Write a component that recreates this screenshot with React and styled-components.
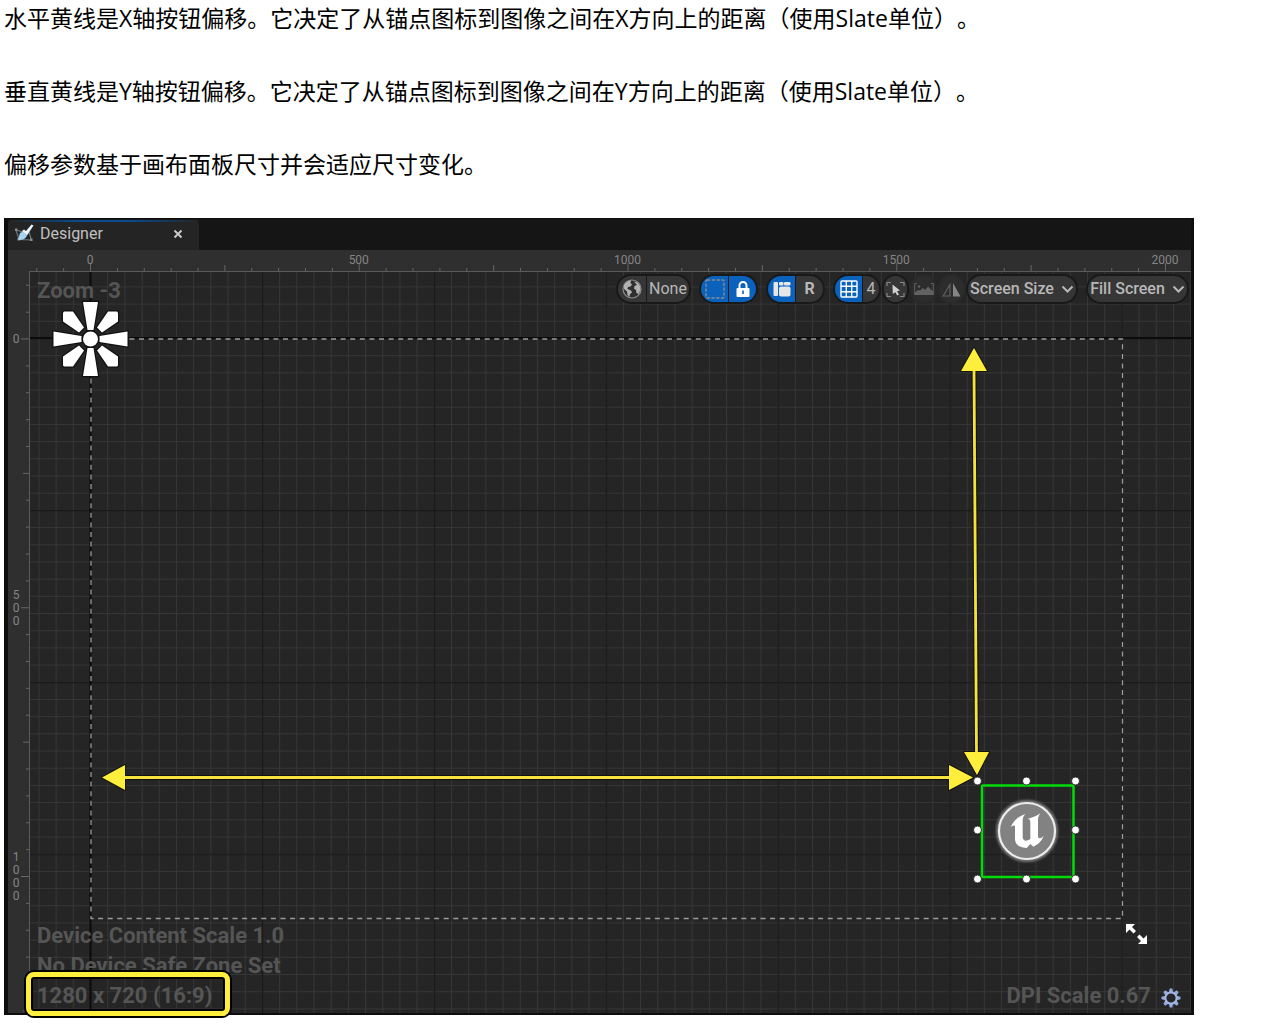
import React from "react";
import styled, { createGlobalStyle } from "styled-components";

const Global = createGlobalStyle`
  *, *::before, *::after { box-sizing: border-box; }
  body { margin: 0; background: #fff; color: #000; }
`;

const Article = styled.main`
  padding: 0 12px 14px 4px;
  font-family: "Open Sans", "Noto Sans CJK SC", sans-serif;
`;

const Copy = styled.div`
  display: grid;
  gap: 37px;
  padding-bottom: 36px;
`;

const Paragraph = styled.p`
  margin: 0;
  font-size: 23px;
  line-height: 36px;
  text-spacing-trim: space-all;
  font-feature-settings: "chws" 0, "halt" 0;
`;

const Panel = styled.section`
  max-width: 1190px;
  border: 1px solid #0e0e0e;
  border-width: 1px 3px 2px 4px;
  background: #242424;
  font-family: Roboto, sans-serif;
  color: #c0c0c0;
`;

const TabBar = styled.div`
  display: flex;
  height: 31px;
  padding-top: 1px;
  background: #151515;
`;

const Tab = styled.div`
  display: flex;
  align-items: center;
  gap: 6px;
  width: 191px;
  padding: 0 14px 2px 6px;
  border-radius: 4px 4px 0 0;
  background: linear-gradient(90deg, #242424, #0b4a8c 35%, #0b4a8c 65%, #242424) 0 0 / 100% 2px no-repeat #242424;
  font-size: 16px;
  line-height: 24px;
`;

const TabTitle = styled.span`
  flex: 1;
`;

const CloseButton = styled.button`
  display: flex;
  padding: 2px;
  border: 0;
  background: none;
  color: #c8c8c8;
`;

const Workspace = styled.div`
  display: grid;
  grid-template-columns: 22px 1fr;
  grid-template-rows: 22px 741px;
  background: #2f2f2f;
`;

const TopRuler = styled.svg`
  grid-column: 1 / 3;
  width: 100%;
  height: 22px;
  font-size: 12px;
`;

const SideRuler = styled.svg`
  width: 22px;
  height: 100%;
  font-size: 12px;
`;

const Canvas = styled.div`
  display: grid;
  grid-template: 1fr / minmax(0, 1fr);
  background: #252525;
`;

const Scene = styled.svg`
  grid-area: 1 / 1;
  width: 100%;
  height: 100%;
`;

const Overlay = styled.div`
  grid-area: 1 / 1;
  z-index: 1;
  display: flex;
  flex-direction: column;
  justify-content: space-between;
  padding: 2px 2px 2px 7px;
`;

const OverlayRow = styled.div`
  display: flex;
  justify-content: space-between;
  align-items: ${(p) => p.$align || "flex-start"};
`;

const Hud = styled.div`
  font-size: 22px;
  font-weight: 700;
  line-height: 30px;
  color: #555;
`;

const ZoomLabel = styled(Hud)`
  padding-top: 2px;
`;

const HudLine = styled.div`
  width: max-content;
`;

const Resolution = styled(HudLine)`
  position: relative;
  &::after {
    content: "";
    position: absolute;
    inset: -9px -18px -5px -11px;
    border: 5px solid #ffee3c;
    border-radius: 8px;
    box-shadow: 0 0 0 2px #000, inset 0 0 0 2px #000;
  }
`;

const DpiRow = styled(Hud)`
  display: flex;
  align-items: center;
  gap: 10px;
  padding-right: 8px;
`;

const IconButton = styled.button`
  display: flex;
  padding: 4px 0 0;
  border: 0;
  background: none;
`;

const Toolbar = styled.div`
  display: flex;
  gap: ${(p) => p.$gap || 8}px;
`;

const Pill = styled.div`
  display: flex;
  height: 30px;
  border: 2px solid #191919;
  border-radius: 15px;
  background: #191919;
  overflow: hidden;
  gap: 1px;
`;

const Segment = styled.button`
  display: flex;
  align-items: center;
  justify-content: center;
  width: ${(p) => p.$width}px;
  padding: 0;
  border: 0;
  background: ${(p) => (p.$active ? "#0a62bd" : "#363636")};
  color: ${(p) => (p.$active ? "#fff" : "#b8b8b8")};
  font: ${(p) => (p.$bold ? 700 : 400)} 16px/24px Roboto, sans-serif;
`;

const RoundButton = styled(Segment)`
  width: 27px;
  height: 30px;
  border: 2px solid ${(p) => (p.$dim ? "#2a2a2a" : "#191919")};
  border-radius: 14px;
  background: ${(p) => (p.$dim ? "#2d2d2d" : "#363636")};
  color: ${(p) => (p.$dim ? "#626262" : "#a8a8a8")};
`;

const MenuButton = styled(Segment)`
  gap: 7px;
  height: 30px;
  border: 2px solid #191919;
  border-radius: 15px;
  font-weight: 500;
`;

const Chevron = () => (
  <svg width="13" height="9" viewBox="0 0 13 9" fill="none" stroke="currentColor" strokeWidth="2">
    <path d="M1.5 1.5 6.5 6.5 11.5 1.5" />
  </svg>
);

const DesignerIcon = () => (
  <svg width="20" height="20" viewBox="0 0 20 20">
    <path d="M2 6 5 15.500 17.500 16 15 8M2 6 9 8" fill="none" stroke="#6d7d88" strokeWidth="1.100" />
    <path d="M1 4.500h2.500v2.500H1zM3.500 14h2.500v2.500h-2.500zM16 14.500h2.500v2.500h-2.500z" fill="#888" />
    <path d="M4 16 6 9 9 7.500 13 11.500C12 14.500 9 16.500 4 16Z" fill="#a9d3f2" />
    <path d="M8 7 13 11.500 19.500 1.500 17.500 0.500 12 7 10 5.500Z" fill="#e8f3fb" />
  </svg>
);

const GlobeIcon = () => (
  <svg width="20" height="20" viewBox="0 0 20 20">
    <circle cx="10" cy="10" r="9" fill="#303030" stroke="#8c8c8c" strokeWidth="1.200" />
    <path d="M2 6C4 3 6 1.500 9 1.300L8.500 4 10 5.500 8.500 7.500 6 8 5.500 10 9 11.500 10 13.500 8 15 7.500 18 5.500 16 5 12.500 2 10Z" fill="#b2b2b2" />
    <path d="M12 2.500 15.500 3.500 18 7 18.500 11 16.500 15 14.500 14 14 11 12 9.500 12.500 7 15 6Z" fill="#b2b2b2" />
  </svg>
);

const DashedSquareIcon = () => (
  <svg width="20" height="20" viewBox="0 0 20 20">
    <rect x="1" y="1" width="18" height="18" rx="1" fill="none" stroke="#8c8c8c" strokeWidth="1.400" strokeDasharray="3.200 1.600" />
  </svg>
);

const LockIcon = () => (
  <svg width="14" height="16" viewBox="0 0 14 16">
    <path d="M3.500 8V4.500a3.500 3.500 0 0 1 7 0V8" fill="none" stroke="#fff" strokeWidth="2" />
    <rect x="0.500" y="7" width="13" height="9" rx="1" fill="#fff" />
    <path d="M6.200 9.500h1.600v3.500H6.200z" fill="#0a62bd" />
  </svg>
);

const LayoutIcon = () => (
  <svg width="18" height="16" viewBox="0 0 18 16" fill="#e6e6e6">
    <rect x="0.500" y="1" width="4.500" height="14" rx="1" />
    <rect x="6" y="1" width="4.500" height="3.500" rx="1" />
    <rect x="11" y="1" width="6.500" height="3.500" rx="1" />
    <rect x="6" y="5.500" width="11.500" height="10" rx="2" />
  </svg>
);

const GridIcon = () => (
  <svg width="18" height="18" viewBox="0 0 18 18" fill="none" stroke="#fff" strokeWidth="1.400">
    <rect x="1" y="1" width="16" height="16" rx="1" />
    <path d="M6.300 1v16M11.700 1v16M1 6.300h16M1 11.700h16" />
  </svg>
);

const PointerIcon = () => (
  <svg width="19" height="17" viewBox="0 0 19 17">
    <path d="M1 5V1.500h4M14 1.500H18V5M18 12v3.500h-4M5 15.500H1v-3.500" fill="none" stroke="#888" strokeWidth="1.200" />
    <path d="M6.500 3.500 14 9.500 11 10.200 13 13.500 11.200 14.500 9.400 11.200 6.800 13Z" fill="#d0d0d0" />
  </svg>
);

const PictureIcon = () => (
  <svg width="20" height="14" viewBox="0 0 20 14">
    <path d="M0.700 13V1.500h2M17 1.500h2.300V13" fill="none" stroke="currentColor" />
    <path d="M1 13V10.500L4 8 6 8.500 9 6 11 8 14 4.500 19 9.500V13Z" fill="currentColor" />
    <circle cx="5" cy="4.500" r="1.300" fill="currentColor" />
  </svg>
);

const MirrorIcon = () => (
  <svg width="19" height="15" viewBox="0 0 19 15">
    <path d="M8 2.500V14H1.200Z" fill="none" stroke="currentColor" strokeWidth="1.100" />
    <path d="M11 1V14.500H18.500Z" fill="#858585" />
  </svg>
);

const GearIcon = () => (
  <svg width="20" height="20" viewBox="-10 -10 20 20">
    <g fill="#93a9dd">
      {[0, 45, 90, 135, 180, 225, 270, 315].map((a) => (
        <path key={a} d="M-2.200 -5.500-1.300 -9.500H1.300L2.200 -5.500Z" transform={`rotate(${a})`} />
      ))}
    </g>
    <circle r="5.600" fill="#262626" stroke="#a3b5e2" strokeWidth="2" />
  </svg>
);

/* 500 units of the design span 268.75 pixels at this zoom. */
const STEP = 26.875;
const tickLength = (i) => (i % 10 === 0 ? 8 : i % 5 === 0 ? 6 : 3);
const ticks = (from, to) => Array.from({ length: to - from + 1 }, (_, i) => from + i);

const HorizontalRuler = () => (
  <TopRuler>
    <path d="M21 21.500H2000" stroke="#5a5a5a" />
    {ticks(-2, 40).map((i) => (
      <path key={i} d={`M${82.5 + i * STEP} 21V${21 - tickLength(i)}`} stroke="#666" />
    ))}
    {[0, 1, 2, 3, 4].map((n) => (
      <text key={n} x={82 + n * 268.75} y="14" textAnchor="middle" fill="#858585">{n * 500}</text>
    ))}
  </TopRuler>
);

const VerticalRuler = () => (
  <SideRuler>
    <path d="M21.500 0V741" stroke="#5a5a5a" />
    {ticks(-2, 25).map((i) => (
      <path key={i} d={`M21 ${67 + i * STEP}H${21 - tickLength(i)}`} stroke="#666" />
    ))}
    {["0", "500", "1000"].map((label, n) =>
      [...label].map((c, i) => (
        <text key={label + i} x="8" y={71 + n * 268.75 + (i - (label.length - 1) / 2) * 13} textAnchor="middle" fill="#858585">{c}</text>
      ))
    )}
  </SideRuler>
);

const Arrow = ({ d, heads }) => (
  <g strokeLinejoin="round">
    <path d={d} stroke="#111" strokeWidth="5" />
    <path d={heads} fill="#ffee3c" stroke="#151505" strokeWidth="2" />
    <path d={d} stroke="#f5e23a" strokeWidth="2.800" />
    <path d={heads} fill="#ffee3c" />
  </g>
);

const Anchor = () => (
  <g transform="translate(90.500 339)" fill="#fff" stroke="#111" strokeWidth="2.500" paintOrder="stroke">
    {[0, 90, 180, 270].map((a) => (
      <g key={a} transform={`rotate(${a})`}>
        <path d="M-7.500-37H7.500L3-9H-3Z" />
        <path d="M-27.500-26.500-26.500-27.500H-17.500L-6.500-11.500-11.500-6.500-27.500-17.500Z" />
      </g>
    ))}
    <circle r="7.500" />
  </g>
);

const SelectedImage = () => (
  <g>
    <rect x="982" y="785.500" width="91.500" height="91.500" rx="1" fill="none" stroke="#00dc0a" strokeWidth="2.500" />
    <circle cx="1027" cy="831" r="31" fill="#777" filter="url(#soft)" />
    <circle cx="1027" cy="831" r="28" fill="#828282" stroke="#ececec" strokeWidth="2.200" />
    <path
      transform="translate(920 730) scale(0.33333)"
      fill="#fff"
      d="M272 292C280 272 290 262 316 252C308 261 308 267 308 274V322C309 334 320 335 331 327V277C331 269 328 266 322 267C334 263 350 260 361 250C354 260 354 266 354 274V318C355 328 362 327 371 317C365 334 354 343 340 350L331 342 320 354C300 353 286 346 285 328V291C285 284 278 286 272 292Z"
    />
    {[977.5, 1026.5, 1075.5].map((x) =>
      [781, 830, 879].map((y) =>
        x === 1026.5 && y === 830 ? null : <circle key={`${x}-${y}`} cx={x} cy={y} r="4" fill="#fff" stroke="#111" strokeWidth="0.800" />
      )
    )}
  </g>
);

/* The scene is drawn in panel coordinates; its group shifts them to the canvas corner. */
const CanvasScene = () => (
  <Scene>
    <defs>
      <filter id="soft" x="-20%" y="-20%" width="140%" height="140%">
        <feGaussianBlur stdDeviation="1.200" />
      </filter>
      <pattern id="minor" x="90" y="338" width="17.190" height="17.190" patternUnits="userSpaceOnUse">
        <path d="M0.500 0V17.190M0 0.500H17.190" stroke="#363636" />
      </pattern>
      <pattern id="major" x="90" y="338" width="171.900" height="171.900" patternUnits="userSpaceOnUse">
        <path d="M0.500 0V171.900M0 0.500H171.900" stroke="#171717" strokeWidth="1.500" />
      </pattern>
    </defs>
    <g transform="translate(-30 -272)">
      <rect width="2400" height="1100" fill="url(#minor)" />
      <rect width="2400" height="1100" fill="url(#major)" />
      <path d="M90.500 272V1013M30 338H2400" stroke="#0c0c0c" strokeWidth="2" />
      <rect x="91" y="339" width="1031.500" height="579.500" fill="none" stroke="#9a9a9a" strokeWidth="1.300" strokeDasharray="5 4.600" />
      <Anchor />
      <Arrow d="M974 369 976.500 754" heads="M974 348 987 371H961ZM977 775 964 752H989Z" />
      <Arrow d="M123 777.500H951" heads="M102 777.500 125 765V790ZM973 777.500 949 765V790Z" />
      <SelectedImage />
      <path d="M1126 924h9l-3 3 4 4-2.500 2.500-4-4-3.500 3.500ZM1147 944h-9l3-3-4-4 2.500-2.500 4 4 3.500-3.500Z" fill="#fff" />
    </g>
  </Scene>
);

export default function App() {
  return (
    <>
      <Global />
      <Article lang="zh-CN">
        <Copy>
          <Paragraph>水平黄线是X轴按钮偏移。它决定了从锚点图标到图像之间在X方向上的距离（使用Slate单位）。</Paragraph>
          <Paragraph>垂直黄线是Y轴按钮偏移。它决定了从锚点图标到图像之间在Y方向上的距离（使用Slate单位）。</Paragraph>
          <Paragraph>偏移参数基于画布面板尺寸并会适应尺寸变化。</Paragraph>
        </Copy>
        <Panel lang="en">
          <TabBar>
            <Tab>
              <DesignerIcon />
              <TabTitle>Designer</TabTitle>
              <CloseButton aria-label="Close">
                <svg width="10" height="10" viewBox="0 0 10 10" stroke="currentColor" strokeWidth="2">
                  <path d="M1.500 1.500 8.500 8.500M8.500 1.500 1.500 8.500" />
                </svg>
              </CloseButton>
            </Tab>
          </TabBar>
          <Workspace>
            <HorizontalRuler />
            <VerticalRuler />
            <Canvas>
              <CanvasScene />
              <Overlay>
                <OverlayRow>
                  <ZoomLabel>Zoom -3</ZoomLabel>
                  <Toolbar>
                    <Pill>
                      <Segment $width={28} aria-label="Localization"><GlobeIcon /></Segment>
                      <Segment $width={42}>None</Segment>
                    </Pill>
                    <Pill>
                      <Segment $width={27} $active aria-label="Show outlines"><DashedSquareIcon /></Segment>
                      <Segment $width={27} $active aria-label="Respect locks"><LockIcon /></Segment>
                    </Pill>
                    <Pill>
                      <Segment $width={27} $active aria-label="Layout mode"><LayoutIcon /></Segment>
                      <Segment $width={27} $bold>R</Segment>
                    </Pill>
                    <Toolbar $gap={1}>
                      <Pill>
                        <Segment $width={27} $active aria-label="Grid snapping"><GridIcon /></Segment>
                        <Segment $width={16}>4</Segment>
                      </Pill>
                      <RoundButton aria-label="Select"><PointerIcon /></RoundButton>
                      <RoundButton $dim aria-label="Background image"><PictureIcon /></RoundButton>
                      <RoundButton $dim aria-label="Flip"><MirrorIcon /></RoundButton>
                      <MenuButton $width={112}>Screen Size <Chevron /></MenuButton>
                    </Toolbar>
                    <MenuButton $width={103}>Fill Screen <Chevron /></MenuButton>
                  </Toolbar>
                </OverlayRow>
                <OverlayRow $align="flex-end">
                  <Hud>
                    <HudLine>Device Content Scale 1.0</HudLine>
                    <HudLine>No Device Safe Zone Set</HudLine>
                    <Resolution>1280 x 720 (16:9)</Resolution>
                  </Hud>
                  <DpiRow>
                    DPI Scale 0.67
                    <IconButton aria-label="Settings"><GearIcon /></IconButton>
                  </DpiRow>
                </OverlayRow>
              </Overlay>
            </Canvas>
          </Workspace>
        </Panel>
      </Article>
    </>
  );
}
